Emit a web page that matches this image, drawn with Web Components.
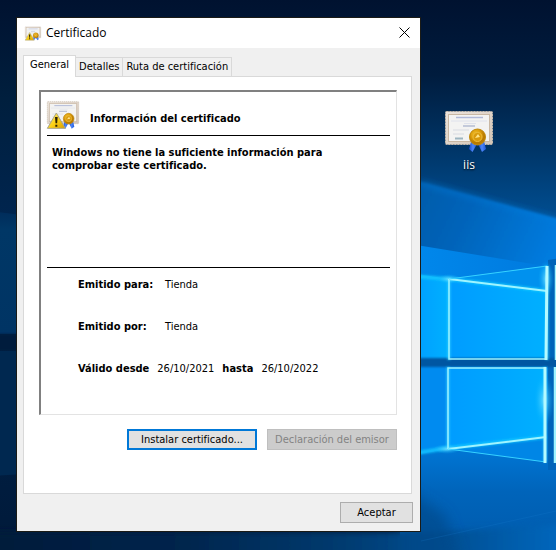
<!DOCTYPE html>
<html lang="es">
<head>
<meta charset="utf-8">
<meta name="viewport" content="width=device-width, initial-scale=1">
<title>Certificado</title>
<style>
html, body { margin: 0; min-height: 100%; }
body { background: #00234a; }
</style>
</head>
<body>
<desktop-screen>
  <certificate-dialog slot="window" heading="Certificado">
    <certificate-summary></certificate-summary>
  </certificate-dialog>
  <desktop-shortcut slot="icons" label="iis"></desktop-shortcut>
</desktop-screen>

<template id="t-screen">
<style>
:host { position: relative; display: flex; box-sizing: border-box; min-height: 100vh; padding: 17px 0 18px 16px; overflow: hidden; font: 11px/13px "DejaVu Sans Condensed", sans-serif; color: #000; }
desktop-wallpaper { position: absolute; inset: 0; }
main { position: relative; display: flex; flex: 1; min-width: 0; }
aside { position: relative; flex: none; display: flex; flex-direction: column; gap: 24px; width: 96px; padding: 94px 39px 0 0; }
</style>
<desktop-wallpaper></desktop-wallpaper>
<main><slot name="window"></slot></main>
<aside><slot name="icons"></slot></aside>
</template>

<template id="t-wallpaper">
<style>
:host { display: block; }
svg { display: block; width: 100%; height: 100%; }
</style>
<svg viewBox="0 0 556 550" preserveAspectRatio="xMidYMid slice" aria-hidden="true">
  <defs>
    <linearGradient id="base" x1="0" y1="0" x2="0" y2="1">
      <stop offset="0" stop-color="#001230"/><stop offset=".18" stop-color="#001f3e"/><stop offset=".4" stop-color="#00254f"/><stop offset="1" stop-color="#001a3a"/>
    </linearGradient>
    <linearGradient id="sky" x1="0" y1="0" x2="0" y2="1">
      <stop offset="0" stop-color="#001230"/><stop offset=".3" stop-color="#001c3e"/><stop offset=".55" stop-color="#003160"/><stop offset="1" stop-color="#005aa6"/>
    </linearGradient>
    <linearGradient id="band" x1="0" y1="0" x2="1" y2=".35">
      <stop offset="0" stop-color="#0058a4"/><stop offset=".45" stop-color="#0064ba"/><stop offset="1" stop-color="#007ce0"/>
    </linearGradient>
    <linearGradient id="ray" x1="0" y1="0" x2="1" y2="0">
      <stop offset="0" stop-color="#0088ec"/><stop offset="1" stop-color="#0078dc"/>
    </linearGradient>
    <linearGradient id="pane" x1="0" y1="0" x2="1" y2="0">
      <stop offset="0" stop-color="#009cff"/><stop offset="1" stop-color="#00b0ff"/>
    </linearGradient>
    <linearGradient id="low" x1="0" y1="0" x2="0" y2="1">
      <stop offset="0" stop-color="#0080e2"/><stop offset=".45" stop-color="#0074d2"/><stop offset=".65" stop-color="#0064ba"/><stop offset="1" stop-color="#0059aa"/>
    </linearGradient>
    <linearGradient id="foot" x1="0" y1="0" x2="1" y2="0">
      <stop offset="0" stop-color="#001836"/><stop offset=".35" stop-color="#00254d"/><stop offset=".6" stop-color="#003b70"/><stop offset=".8" stop-color="#00549c"/><stop offset="1" stop-color="#006fcb"/>
    </linearGradient>
    <radialGradient id="flare"><stop offset="0" stop-color="#7fe4ff" stop-opacity=".8"/><stop offset="1" stop-color="#00b4ff" stop-opacity="0"/></radialGradient>
    <linearGradient id="beam" x1="0" y1="0" x2="0" y2="1">
      <stop offset="0" stop-color="#002c5a"/><stop offset=".15" stop-color="#003766"/><stop offset="1" stop-color="#003464"/>
    </linearGradient>
    <filter id="b1" x="-20%" y="-20%" width="140%" height="140%"><feGaussianBlur stdDeviation="1"/></filter>
    <filter id="b3" x="-50%" y="-50%" width="200%" height="200%"><feGaussianBlur stdDeviation="3"/></filter>
    <filter id="b7" x="-100%" y="-100%" width="300%" height="300%"><feGaussianBlur stdDeviation="7"/></filter>
  </defs>
  <rect width="556" height="550" fill="url(#base)"/>
  <path d="M-10 211L60 220V334H-10Z" fill="url(#beam)"/>
  <path d="M-10 334H60V351H-10Z" fill="#001c3e" filter="url(#b1)"/>
  <path d="M-10 351H60V472L-10 476Z" fill="#002850"/>
  <rect x="300" width="260" height="250" fill="url(#sky)"/>
  <path d="M400 184L560 228V270H400Z" fill="#0062b8" filter="url(#b7)"/>
  <path d="M400 176L570 222V300L400 262Z" fill="url(#band)" filter="url(#b1)"/>
  <path d="M421 183L560 221" stroke="#0080e0" stroke-width="5" opacity=".4" filter="url(#b3)"/>
  <path d="M410 244L570 270V370H410Z" fill="url(#ray)"/>
  <path d="M410 273L449 279L449 360H410Z" fill="url(#pane)"/>
  <path d="M449 279L547 266V360H449Z" fill="url(#pane)"/>
  <path d="M449 279L547 266V291Z" fill="#0091ee"/>
  <path d="M400 366H560V560H400Z" fill="url(#low)"/>
  <path d="M410 366H448V449L410 456Z" fill="#008bf0"/>
  <path d="M448 366H546V436L448 449Z" fill="url(#pane)"/>
  <path d="M448 449L546 436V462Z" fill="#0086e6"/>
  <path d="M548 260L560 258V470H548Z" fill="#0064b9"/>
  <path d="M410 358H560V367H410Z" fill="#0056a2" filter="url(#b1)"/>
  <path d="M-40 532H440L600 522V590H-40Z" fill="url(#foot)" filter="url(#b3)"/>
  <path d="M400 485L445 515L470 590H400Z" fill="#00498a" opacity=".7" filter="url(#b7)"/>
  <path d="M421 541L556 511" stroke="#1b7fd2" opacity=".2"/>
  <path d="M410 276L449 279L547 291M410 454L448 448L546 437" fill="none" stroke="#12c8ff" stroke-width="4" opacity=".8" filter="url(#b1)"/>
  <path d="M449 279V360M448 367V449M547 266V360M545 367V462" fill="none" stroke="#33cfff" stroke-width="3" opacity=".8" filter="url(#b1)"/>
  <ellipse cx="449" cy="279" rx="12" ry="5" fill="url(#flare)"/>
  <ellipse cx="447" cy="449" rx="14" ry="5" fill="url(#flare)"/>
  <ellipse cx="544" cy="400" rx="10" ry="26" fill="url(#flare)"/>
  <ellipse cx="546" cy="279" rx="8" ry="18" fill="url(#flare)"/>
  <g fill="none" stroke="#9ff4ff">
    <path d="M449 279L547 291M448 449L546 437" stroke-width="2"/>
    <path d="M449 279V359H546M546 368H448V449" stroke-width="1.5"/>
    <path d="M449 279L547 266M448 449L546 462" stroke="#36d2ff"/>
    <path d="M547 266L546 360M545 367V463" stroke="#b4faff" stroke-width="3"/>
    <path d="M556 265V360M555 367V463" stroke-width="2.5"/>
  </g>
</svg>
</template>

<template id="t-shortcut">
<style>
:host { display: block; }
button { display: flex; flex-direction: column; align-items: center; gap: 6px; width: 100%; padding: 0; border: 0; background: none; color: #fff; font: 12px/14px "Open Sans", sans-serif; text-shadow: 0 1px 2px #000; }
certificate-icon { width: 48px; height: 41px; }
</style>
<button type="button"><certificate-icon></certificate-icon><span id="label"></span></button>
</template>

<template id="t-icon">
<style>
:host { display: block; flex: none; }
svg { display: block; width: 100%; height: 100%; overflow: visible; }
#warning { display: none; }
:host([warning]) #warning { display: inline; }
</style>
<svg viewBox="0 0 48 41" aria-hidden="true">
  <defs>
    <linearGradient id="frame" x1="0" y1="0" x2="1" y2="1"><stop offset="0" stop-color="#ece4dc"/><stop offset="1" stop-color="#d2c4b6"/></linearGradient>
    <radialGradient id="gold" cx=".4" cy=".35"><stop offset="0" stop-color="#f3c636"/><stop offset=".6" stop-color="#dfa00c"/><stop offset="1" stop-color="#b97a00"/></radialGradient>
    <linearGradient id="blue" x1="0" y1="0" x2="1" y2="0"><stop offset="0" stop-color="#1746c4"/><stop offset=".5" stop-color="#4c86f8"/><stop offset="1" stop-color="#1f55d8"/></linearGradient>
    <linearGradient id="warn" x1="0" y1="0" x2="1" y2="1"><stop offset="0" stop-color="#fff27a"/><stop offset=".55" stop-color="#fbcf14"/><stop offset="1" stop-color="#d79b00"/></linearGradient>
  </defs>
  <rect x=".5" y=".5" width="47" height="33" rx="1" fill="url(#frame)" stroke="#c8bcae" stroke-dasharray="2 1"/>
  <rect x="3.5" y="3.5" width="41" height="27" fill="#f3f3f2" stroke="#c9b8a4"/>
  <path d="M11 6.500H38" stroke="#b0b9d8" stroke-width="1.5"/>
  <path d="M6 10H42M19 12.500H31" stroke="#dfe2ec"/>
  <path d="M18 15H30" stroke="#b4bcd2" stroke-width="1.5"/>
  <path d="M8 19H24M8 23H19" stroke="#d8dbe2"/>
  <path d="M10 27.500H18" stroke="#9db5c1" stroke-width="2"/>
  <path d="M26 31L24 38L27.500 41L32 33Z" fill="url(#blue)"/>
  <path d="M33 33L37 41L41 38L39 30Z" fill="url(#blue)"/>
  <circle cx="32.5" cy="26" r="8" fill="url(#gold)" stroke="#c08a10"/>
  <circle cx="32.5" cy="26" r="4.5" fill="#d99a0c" stroke="#ecbc3c"/>
  <path d="M30 27L33 23L35 26Z" fill="#ffe58a"/>
  <g id="warning">
    <path d="M14 17.500L.5 40.500H27.500Z" fill="url(#warn)" stroke="#a8a48c" stroke-width="1.5" stroke-linejoin="round"/>
    <path d="M12 23.500H16L15.200 33H12.800ZM12.500 35H15.500V38H12.500Z" fill="#2b2100"/>
  </g>
</svg>
</template>

<template id="t-dialog">
<style>
:host { display: flex; flex: 1; min-width: 0; }
section { display: flex; flex-direction: column; flex: 1; min-width: 0; border: 1px solid #1b1b16; background: #f0f0f0; }
header { display: flex; align-items: center; gap: 5px; height: 30px; padding: 0 10px 0 8px; background: #fff; }
header certificate-icon { width: 16px; height: 15px; }
h1 { flex: 1; margin: 0; font: 12px/16px "Open Sans", sans-serif; }
header button { display: grid; place-items: center; width: 11px; height: 24px; padding: 0 0 2px; border: 0; background: none; }
nav { display: flex; align-items: flex-end; margin: 7px 6px 0; }
nav button { height: 19px; padding: 0 3px; border: 1px solid #d9d9d9; border-left-width: 0; border-bottom: 0; background: #f0f0f0; font: inherit; line-height: 18px; color: #000; white-space: nowrap; }
nav button[aria-selected="true"] { position: relative; height: 22px; margin-bottom: -1px; padding: 0 6px 3px; border-left-width: 1px; background: #fff; }
.page { display: flex; flex-direction: column; flex: 1; gap: 14px; margin: 0 8px 0 6px; padding: 13px 14px 43px 15px; border: 1px solid #d9d9d9; background: #fff; }
.actions { display: flex; justify-content: flex-end; gap: 10px; }
footer { display: flex; justify-content: flex-end; padding: 8px 7px 8px; }
</style>
<section role="dialog" aria-labelledby="title">
  <header>
    <certificate-icon warning></certificate-icon>
    <h1 id="title"></h1>
    <button type="button" aria-label="Cerrar"><svg width="11" height="11" viewBox="0 0 11 11"><path d="M.5 .5L10.500 10.500M10.500 .5L.5 10.500" stroke="#000" fill="none"/></svg></button>
  </header>
  <nav role="tablist">
    <button type="button" role="tab" aria-selected="true">General</button>
    <button type="button" role="tab" aria-selected="false">Detalles</button>
    <button type="button" role="tab" aria-selected="false">Ruta de certificación</button>
  </nav>
  <div class="page" role="tabpanel">
    <slot></slot>
    <div class="actions">
      <dialog-button wide primary>Instalar certificado...</dialog-button>
      <dialog-button wide disabled>Declaración del emisor</dialog-button>
    </div>
  </div>
  <footer><dialog-button>Aceptar</dialog-button></footer>
</section>
</template>

<template id="t-button">
<style>
:host { display: block; width: 73px; }
:host([wide]) { width: 130px; }
button { display: block; box-sizing: border-box; width: 100%; height: 21px; padding: 0; border: 1px solid #adadad; background: #e1e1e1; color: #000; font: inherit; line-height: 17px; white-space: nowrap; }
:host([primary]) button { border: 2px solid #0078d7; }
button:disabled { border-color: #bfbfbf; background: #ccc; color: #838383; }
</style>
<button type="button"><slot></slot></button>
</template>

<template id="t-summary">
<style>
:host { display: flex; flex-direction: column; flex: 1; padding: 9px 6px 0; border: solid; border-width: 2px 1px 1px 2px; border-color: #808080 #e3e3e3 #e3e3e3 #808080; }
header { display: flex; align-items: center; gap: 11px; padding-bottom: 6px; border-bottom: 1px solid #000; }
certificate-icon { width: 32px; height: 28px; }
h2 { margin: 6px 0 0; font: inherit; font-weight: bold; }
.status { min-height: 121px; max-width: 290px; margin: 0; padding: 10px 0 0 5px; font-weight: bold; }
dl { margin: 0; padding: 10px 0 0 31px; border-top: 1px solid #000; }
dl div { display: flex; min-height: 42px; }
dt { font-weight: bold; min-width: 87px; }
dd { margin: 0; }
dl .range { gap: 8px; min-height: 0; }
.range dt { min-width: 0; }
</style>
<header><certificate-icon warning></certificate-icon><h2>Información del certificado</h2></header>
<p class="status">Windows no tiene la suficiente información para comprobar este certificado.</p>
<dl>
  <div><dt>Emitido para:</dt><dd>Tienda</dd></div>
  <div><dt>Emitido por:</dt><dd>Tienda</dd></div>
  <div class="range"><dt>Válido desde</dt><dd>26/10/2021</dd><dt>hasta</dt><dd>26/10/2022</dd></div>
</dl>
</template>

<script>
class TemplateElement extends HTMLElement {
  constructor() {
    super();
    this.attachShadow({ mode: "open" }).append(
      document.getElementById(this.constructor.template).content.cloneNode(true));
  }
}
class DesktopScreen extends TemplateElement { static template = "t-screen"; }
class DesktopWallpaper extends TemplateElement { static template = "t-wallpaper"; }
class CertificateIcon extends TemplateElement { static template = "t-icon"; }
class CertificateSummary extends TemplateElement { static template = "t-summary"; }
class DesktopShortcut extends TemplateElement {
  static template = "t-shortcut";
  connectedCallback() { this.shadowRoot.getElementById("label").textContent = this.getAttribute("label"); }
}
class CertificateDialog extends TemplateElement {
  static template = "t-dialog";
  connectedCallback() { this.shadowRoot.getElementById("title").textContent = this.getAttribute("heading"); }
}
class DialogButton extends TemplateElement {
  static template = "t-button";
  connectedCallback() { this.shadowRoot.querySelector("button").disabled = this.hasAttribute("disabled"); }
}
customElements.define("certificate-icon", CertificateIcon);
customElements.define("dialog-button", DialogButton);
customElements.define("certificate-summary", CertificateSummary);
customElements.define("certificate-dialog", CertificateDialog);
customElements.define("desktop-shortcut", DesktopShortcut);
customElements.define("desktop-wallpaper", DesktopWallpaper);
customElements.define("desktop-screen", DesktopScreen);
</script>
</body>
</html>
